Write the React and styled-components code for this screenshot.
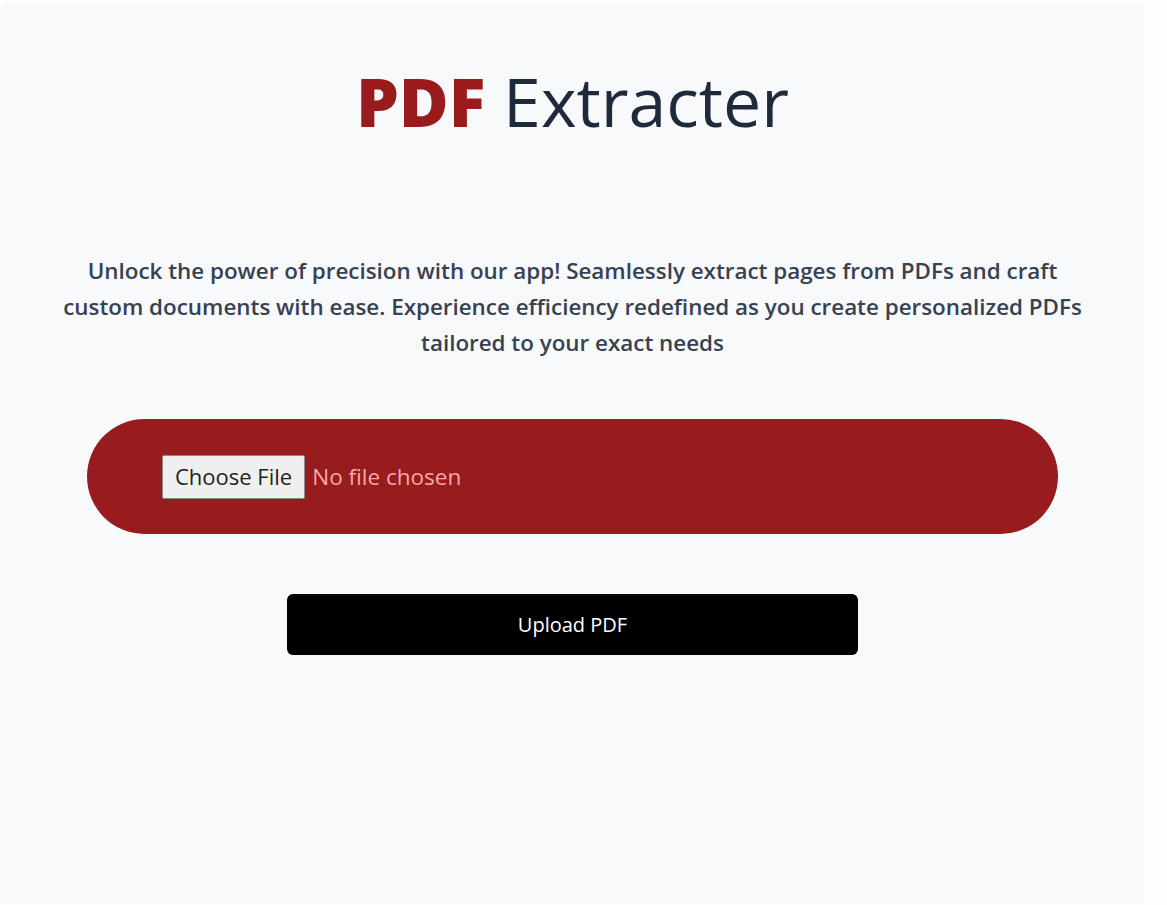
import React from 'react';
import styled, { createGlobalStyle } from 'styled-components';

const GlobalStyle = createGlobalStyle`
    html, body {
        margin: 0;
        padding: 0;
        background: #fdfdfd;
    }

    body {
        font-family: "Open Sans", "Noto Sans", sans-serif;
    }
`;

const Page = styled.main`
    width: 1143px;
    height: 900px;
    margin: 3px 0 0 1px;
    background: #f8f9fb;
    box-sizing: border-box;
    padding-top: 54px;

    display: flex;
    flex-direction: column;
    align-items: center;
`;

const Title = styled.h1`
    font-size: 68px;
    font-weight: 400;
    line-height: 1.3;
    color: #1e293b;
    margin: 0;
`;

const Brand = styled.span`
    font-weight: 800;
    color: #991b1b;
`;

const Intro = styled.p`
    width: 1040px;
    margin: 108px 0 0 0;
    font-size: 22.4px;
    font-weight: 600;
    line-height: 36px;
    color: #374151;
    text-align: center;
`;

const DropZone = styled.form`
    width: 971px;
    height: 115px;
    margin-top: 58px;
    padding: 0 75px;
    box-sizing: border-box;
    background: #981b1e;
    border-radius: 999px;

    display: flex;
    align-items: center;
`;

const FileInput = styled.input`
    font-family: "Open Sans", "Noto Sans", sans-serif;
    font-size: 22.5px;
    color: #f5a8a8;

    &::file-selector-button {
        font-family: inherit;
        font-size: 22px;
        line-height: 27px;
        color: #1f1f1f;
        background: #efefef;
        border: 1px solid #8a8a8a;
        border-radius: 2px;
        padding: 7px 12px 8px;
        margin-right: 7px;
    }
`;

const UploadButton = styled.button`
    width: 571px;
    height: 61px;
    margin-top: 60px;
    background: #000;
    color: #fff;
    border: none;
    border-radius: 6px;
    font-family: "Open Sans", "Noto Sans", sans-serif;
    font-size: 20px;
    cursor: pointer;
`;

const App = () => {
    return (
        <>
            <GlobalStyle />
            <Page>
                <Title>
                    <Brand>PDF</Brand> Extracter
                </Title>
                <Intro>
                    Unlock the power of precision with our app! Seamlessly extract pages from PDFs and craft
                    custom documents with ease. Experience efficiency redefined as you create personalized PDFs
                    tailored to your exact needs
                </Intro>
                <DropZone onSubmit={(e) => e.preventDefault()}>
                    <FileInput type="file" accept="application/pdf" />
                </DropZone>
                <UploadButton type="button">Upload PDF</UploadButton>
            </Page>
        </>
    );
};

export default App;
